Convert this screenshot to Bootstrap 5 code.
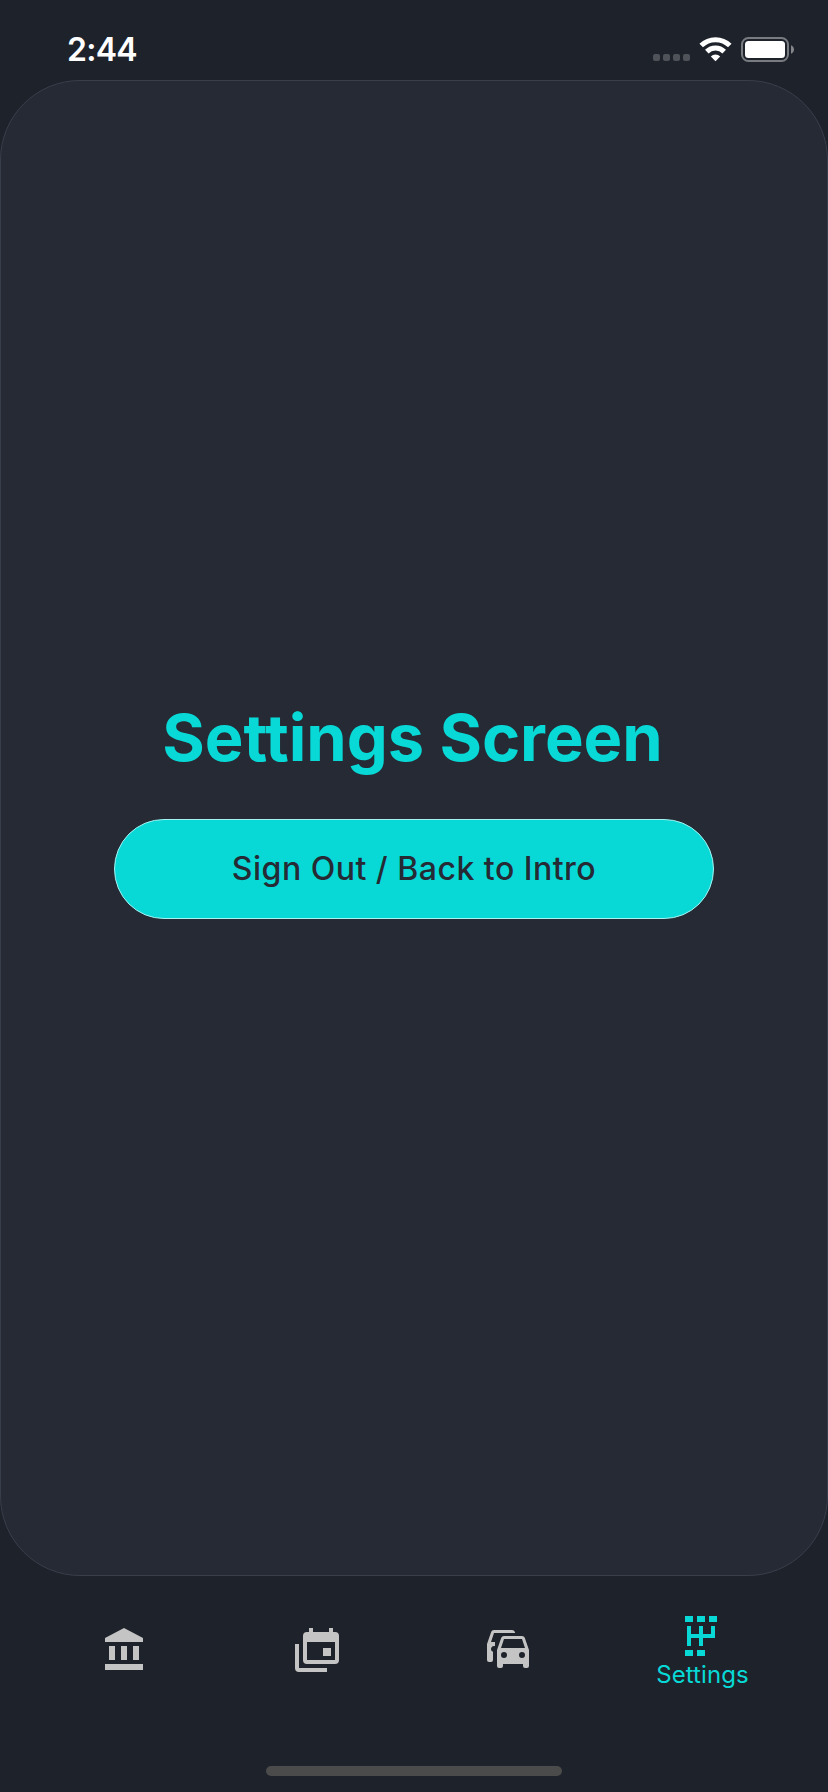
<!DOCTYPE html>
<html lang="en">
<head>
<meta charset="utf-8">
<meta name="viewport" content="width=device-width, initial-scale=1">
<title>Settings</title>
<link rel="stylesheet" href="https://cdn.jsdelivr.net/npm/bootstrap@5.3.0/dist/css/bootstrap.min.css">
<style>
  body { background: #1e222a; font-family: Inter, "Liberation Sans", sans-serif; }
  .phone { height: 1792px; width: 828px; overflow: hidden; }
  .status { height: 80px; padding: 0 34px 0 67px; }
  .clock { font-size: 32px; font-weight: 600; line-height: 38px; margin-top: 31px; letter-spacing: -.7px; }
  .status-icons { margin-top: 34px; }
  .panel { height: 1496px; background: #252a34; border: 1px solid #393e4b; border-radius: 80px; padding-bottom: 39px; }
  .title { color: #08d9d6; font-size: 65px; font-weight: 700; line-height: 80px; letter-spacing: -.05px; margin: 0 0 41px; padding-right: 3px; }
  .signout { width: 600px; height: 100px; font-size: 32px; font-weight: 500; letter-spacing: .5px; padding: 0;
    --bs-btn-bg: #08d9d6; --bs-btn-color: #252a34; --bs-btn-border-color: #a5f3f2; }
  .tabs { height: 190px; padding: 0 31px 0 29px; }
  .tabs .nav-link { width: 192px; color: #c4c4c4; padding: 50px 0 0; }
  .tabs .nav-link.active { color: #08d9d6; padding-top: 36px; }
  .tab-label { font-size: 24px; line-height: 28px; margin-top: 1px; padding-left: 3px; letter-spacing: .1px; }
  .home-bar { width: 296px; height: 10px; background: #4b4b4b; }
</style>
<script src="https://cdn.jsdelivr.net/npm/bootstrap@5.3.0/dist/js/bootstrap.bundle.min.js"></script>
</head>
<body>
<div class="phone d-flex flex-column">
  <header class="status d-flex justify-content-between align-items-start text-white">
    <div class="clock">2:44</div>
    <svg class="status-icons" width="143" height="32" viewBox="651 34 143 32" aria-label="Signal, Wi-Fi, battery">
      <g fill="#4f5259">
        <rect x="653" y="54" width="7" height="7" rx="2"/><rect x="663" y="54" width="7" height="7" rx="2"/>
        <rect x="673" y="54" width="7" height="7" rx="2"/><rect x="683" y="54" width="7" height="7" rx="2"/>
      </g>
      <g fill="none" stroke="#fff" stroke-width="5">
        <path d="M701.2 45.6A20.3 20.3 0 0 1 729.8 45.6"/>
        <path d="M706.8 51.6A12.4 12.4 0 0 1 724.2 51.6"/>
      </g>
      <path fill="#fff" d="M715.5 61.2L710.8 56.5A6.8 6.8 0 0 1 720.2 56.5Z"/>
      <rect x="742" y="38" width="46" height="23" rx="6.5" fill="none" stroke="#787b80" stroke-width="2"/>
      <rect x="745" y="41" width="40" height="17" rx="3.5" fill="#fff"/>
      <path fill="#84868b" d="M791 45.2c4 1.5 4 7.1 0 8.6z"/>
    </svg>
  </header>

  <main class="panel d-flex flex-column align-items-center justify-content-center">
    <h1 class="title">Settings Screen</h1>
    <button type="button" class="btn signout rounded-pill">Sign Out / Back to Intro</button>
  </main>

  <nav class="tabs nav flex-nowrap align-items-start">
    <a class="nav-link d-flex justify-content-center" href="#" aria-label="Bank">
      <svg width="48" height="48" viewBox="0 0 24 24" fill="currentColor"><path d="M4 10v7h3v-7H4zm6 0v7h3v-7h-3zM2 22h19v-3H2v3zm14-12v7h3v-7h-3zm-4.500-9L2 6v2h19V6l-9.500-5z"/></svg>
    </a>
    <a class="nav-link d-flex justify-content-center" href="#" aria-label="Calendar">
      <svg width="48" height="48" viewBox="0 0 24 24" fill="currentColor"><path d="M21 17V8H7v9h14m0-14a2 2 0 0 1 2 2v12a2 2 0 0 1-2 2H7a2 2 0 0 1-2-2V5a2 2 0 0 1 2-2h1V1h2v2h8V1h2v2h1M3 21h14v2H3a2 2 0 0 1-2-2V9h2v12m16-6h-4v-4h4v4z"/></svg>
    </a>
    <a class="nav-link d-flex justify-content-center" href="#" aria-label="Cars">
      <svg width="48" height="48" viewBox="0 0 24 24" fill="currentColor"><path d="M8 11l1.500-4.500h9L20 11M18.500 16a1.500 1.500 0 1 1 0-3 1.500 1.500 0 0 1 0 3M9.500 16a1.500 1.500 0 1 1 0-3 1.500 1.500 0 0 1 0 3M19.920 6c-.21-.6-.78-1-1.420-1h-9c-.64 0-1.210.4-1.420 1L6 12v8a1 1 0 0 0 1 1h1a1 1 0 0 0 1-1v-1h10v1a1 1 0 0 0 1 1h1a1 1 0 0 0 1-1v-8l-2.080-6M14.920 3c-.21-.6-.78-1-1.420-1h-9c-.64 0-1.210.4-1.420 1L1 9v8a1 1 0 0 0 1 1h1a1 1 0 0 0 1-1v-4.090c-.78-.28-1.180-1.140-.9-1.910.22-.6.770-1 1.400-1H5v-2H3l1.500-4.500h10.590L14.920 3z"/></svg>
    </a>
    <a class="nav-link active d-flex flex-column align-items-center" href="#" aria-current="page">
      <svg width="48" height="48" viewBox="0 0 24 24" fill="currentColor"><path d="M4 2h4v3H4zM10 2h4v3h-4zM16 2h4v3h-4zM5 7h2v4h4V7h2v4h4V7h2v6h-6v4h-2v-4H7v4H5zM4 19h4v3H4zM10 19h4v3h-4z"/></svg>
      <span class="tab-label">Settings</span>
    </a>
  </nav>
  <div class="home-bar rounded-pill mx-auto"></div>
</div>
</body>
</html>
